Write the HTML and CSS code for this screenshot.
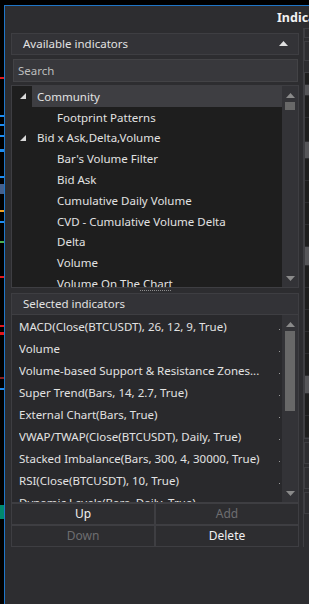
FILE: index.html
```html
<!DOCTYPE html>
<html lang="en">
<head>
  <meta charset="UTF-8" />
  <title>Indicators</title>
  <link rel="stylesheet" href="styles.css">
</head>
<body>

  <div class="chart">
    <span class="mark red" style="top:77px"></span>
    <span class="mark blue" style="top:115px"></span>
    <span class="mark blue" style="top:124px"></span>
    <span class="mark blue" style="top:135px"></span>
    <span class="mark blue thick" style="top:149px"></span>
    <span class="mark blue" style="top:176px"></span>
    <span class="mark slate" style="top:184px"></span>
    <span class="mark orange" style="top:210px"></span>
    <span class="mark blue" style="top:221px"></span>
    <span class="mark green" style="top:241px"></span>
    <span class="mark red" style="top:276px"></span>
    <span class="mark red" style="top:325px"></span>
    <span class="mark red thick" style="top:332px"></span>
    <span class="mark darkred" style="top:377px"></span>
    <span class="mark blue" style="top:388px"></span>
    <span class="mark teal" style="top:505px"></span>
  </div>

  <div class="window">
    <div class="titlebar">Indicators</div>

    <div class="content">
      <div class="panel">

        <div class="group-header">
          <span>Available indicators</span>
          <svg class="caret" width="9" height="5" viewBox="0 0 9 5"><polygon points="0,5 4.5,0 9,5" fill="#e0e0e0"/></svg>
        </div>

        <div class="search">Search</div>

        <div class="tree-box">
          <div class="tree">
            <div class="node expanded selected">
              <svg class="expander" width="6" height="6" viewBox="0 0 6 6"><polygon points="0,6 6,0 6,6" fill="#d8d8d8"/></svg>
              <span class="node-label">Community</span>
            </div>
            <div class="leaf">Footprint Patterns</div>
            <div class="node expanded">
              <svg class="expander" width="6" height="6" viewBox="0 0 6 6"><polygon points="0,6 6,0 6,6" fill="#d8d8d8"/></svg>
              <span class="node-label">Bid x Ask,Delta,Volume</span>
            </div>
            <div class="leaf">Bar's Volume Filter</div>
            <div class="leaf">Bid Ask</div>
            <div class="leaf">Cumulative Daily Volume</div>
            <div class="leaf">CVD - Cumulative Volume Delta</div>
            <div class="leaf">Delta</div>
            <div class="leaf">Volume</div>
            <div class="leaf">Volume On The Chart</div>
          </div>
          <div class="scrollbar">
            <svg width="9" height="5" viewBox="0 0 9 5"><polygon points="0,5 4.5,0 9,5" fill="#8a8a8a"/></svg>
            <div class="track"><div class="thumb small"></div></div>
            <svg width="9" height="5" viewBox="0 0 9 5"><polygon points="0,0 4.5,5 9,0" fill="#8a8a8a"/></svg>
          </div>
        </div>

        <div class="splitter"></div>

        <div class="group-header">
          <span>Selected indicators</span>
        </div>

        <div class="list-box">
          <div class="list">
            <div class="item">MACD(Close(BTCUSDT), 26, 12, 9, True)</div>
            <div class="item">Volume</div>
            <div class="item">Volume-based Support &amp; Resistance Zones...</div>
            <div class="item">Super Trend(Bars, 14, 2.7, True)</div>
            <div class="item">External Chart(Bars, True)</div>
            <div class="item">VWAP/TWAP(Close(BTCUSDT), Daily, True)</div>
            <div class="item">Stacked Imbalance(Bars, 300, 4, 30000, True)</div>
            <div class="item">RSI(Close(BTCUSDT), 10, True)</div>
            <div class="item">Dynamic Levels(Bars, Daily, True)</div>
          </div>
          <div class="scrollbar">
            <svg width="9" height="5" viewBox="0 0 9 5"><polygon points="0,5 4.5,0 9,5" fill="#8a8a8a"/></svg>
            <div class="track"><div class="thumb big"></div></div>
            <svg width="9" height="5" viewBox="0 0 9 5"><polygon points="0,0 4.5,5 9,0" fill="#8a8a8a"/></svg>
          </div>
        </div>

        <div class="buttons">
          <button class="btn">Up</button>
          <button class="btn" disabled>Add</button>
          <button class="btn" disabled>Down</button>
          <button class="btn">Delete</button>
        </div>

      </div>

      <div class="side">
        <div class="side-box h10"></div>
        <div class="side-box h20"></div>
        <div class="side-list">
          <div class="cell dark h12"></div>
          <div class="cell gray h11"></div>
          <div class="cell dark h22"></div>
          <div class="cell dark h24"></div>
          <div class="cell gray h17"></div>
          <div class="cell dark h22"></div>
          <div class="cell dark h22"></div>
          <div class="cell dark h22"></div>
          <div class="cell dark h22"></div>
          <div class="cell gray h19"></div>
          <div class="cell dark h22"></div>
          <div class="cell dark h22"></div>
          <div class="cell dark h22"></div>
          <div class="cell dark h22"></div>
          <div class="cell dark h22"></div>
          <div class="cell gray h18"></div>
          <div class="cell dark h22"></div>
          <div class="cell dark h22"></div>
        </div>
        <div class="side-box h22"></div>
        <div class="side-box h22"></div>
        <div class="side-box h22"></div>
      </div>
    </div>
  </div>

</body>
</html>
```

FILE: styles.css
```css
* {
  box-sizing: border-box;
}

body {
  margin: 0;
  width: 309px;
  height: 604px;
  overflow: hidden;
  background: #000;
  display: flex;
  font-family: "Noto Sans", "Open Sans", sans-serif;
  font-size: 11.5px;
  color: #e2e2e2;
}

/* chart visible behind the dialog */
.chart {
  position: relative;
  width: 4px;
  flex-shrink: 0;
  background: #000;
}

.mark {
  position: absolute;
  left: 0;
  width: 4px;
  height: 2px;
}

.mark.thick { height: 3px; }
.red { background: #e0161c; }
.darkred { background: #8a1a1a; }
.blue { background: #1e8cf0; }
.slate { background: #44608c; height: 10px; }
.orange { background: #f0a020; }
.green { background: #4caf50; }
.teal { background: #00896e; height: 14px; }

.window {
  flex: 1;
  margin-top: 5px;
  border-top: 1px solid #1f76c8;
  border-left: 1px solid #1f76c8;
  background: #2d2d30;
  display: flex;
  flex-direction: column;
  min-width: 0;
}

.titlebar {
  height: 27px;
  padding: 3px 0 0 272px;
  font-size: 12.5px;
  font-weight: bold;
  color: #f2f2f2;
  white-space: nowrap;
  overflow: hidden;
}

.content {
  display: flex;
  padding-left: 6px;
  gap: 4px;
}

.panel {
  width: 288px;
  flex-shrink: 0;
  display: flex;
  flex-direction: column;
}

.group-header {
  height: 22px;
  border: 1px solid #3e3e42;
  background: #333337;
  display: flex;
  align-items: center;
  justify-content: space-between;
  padding: 0 10px 1px 11px;
}

.search {
  margin: 4px 1px 3px 2px;
  height: 23px;
  border: 1px solid #434346;
  background: #38383c;
  color: #bdbdbd;
  padding: 3px 4px;
}

.tree-box,
.list-box {
  display: flex;
  border: 1px solid #3e3e42;
}

.tree-box {
  height: 203px;
  background: #1e1e1e;
}

.tree {
  flex: 1;
  overflow: hidden;
}

.node,
.leaf {
  height: 20.8px;
  display: flex;
  align-items: center;
  white-space: nowrap;
}

.expander {
  margin: 0 6px 0 8px;
  flex-shrink: 0;
}

.node-label {
  flex: 1;
  height: 100%;
  display: flex;
  align-items: center;
  padding-left: 5px;
}

.node.selected .node-label {
  background: #3e3e42;
}

.leaf {
  padding-left: 45px;
}

.scrollbar {
  width: 16px;
  flex-shrink: 0;
  background: #333337;
  display: flex;
  flex-direction: column;
  align-items: center;
  padding: 7px 0 6px;
}

.track {
  flex: 1;
  width: 100%;
  padding: 4px 3px;
}

.thumb {
  background: #686868;
  width: 10px;
}

.thumb.small { height: 8px; }
.thumb.big { height: 80px; }

.splitter {
  height: 5px;
  background-image: linear-gradient(90deg, #8c8c8c 50%, transparent 50%);
  background-size: 2px 1px;
  background-position: center 2px;
  background-repeat: repeat-x;
  margin: 0 128px;
}

.list-box {
  height: 188px;
  background: #29292c;
  border-top: none;
}

.list {
  flex: 1;
  overflow: hidden;
  padding: 1px 0 0 7px;
}

.item {
  height: 22px;
  line-height: 22px;
  white-space: nowrap;
  overflow: hidden;
  position: relative;
  padding-right: 6px;
}

.item::after {
  content: '';
  position: absolute;
  right: 2px;
  top: 13px;
  width: 1px;
  height: 1px;
  background: #9a9a9a;
}

.buttons {
  display: grid;
  grid-template-columns: 1fr 1fr;
}

.btn {
  height: 22px;
  margin: 0;
  border: 1px solid #3e3e42;
  background: #2d2d30;
  color: #f0f0f0;
  font-family: inherit;
  font-size: 12px;
  padding: 0 0 1px;
}

.btn:disabled {
  color: #6d6d70;
}

.side {
  flex: 1;
  display: flex;
  flex-direction: column;
  gap: 3px;
  margin-top: -5px;
  border-left: 1px solid #3e3e42;
}

.side-box {
  border: 1px solid #3e3e42;
  border-right: none;
}

.side-list {
  display: flex;
  flex-direction: column;
  background: #1e1e1e;
  border: 1px solid #3e3e42;
  border-right: none;
  margin-top: 8px;
}

.cell { border-bottom: 1px solid #2d2d30; }
.cell.gray { background: #555558; }
.cell.dark { background: #1e1e1e; }

.h10 { height: 10px; }
.h11 { height: 11px; }
.h12 { height: 12px; }
.h17 { height: 17px; }
.h18 { height: 18px; }
.h19 { height: 19px; }
.h20 { height: 20px; }
.h22 { height: 22px; }
.h24 { height: 24px; }
```
